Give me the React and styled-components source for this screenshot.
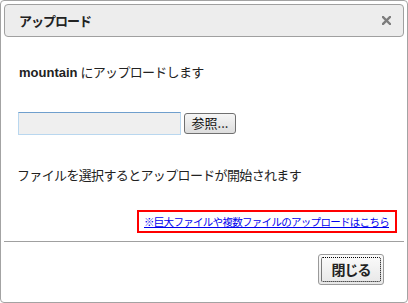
import React from "react";
import styled, { createGlobalStyle } from "styled-components";

const GlobalStyle = createGlobalStyle`
    html, body {
        margin: 0;
        padding: 0;
        background: #ffffff;
    }
    body {
        font-family: "Noto Sans CJK JP", "Liberation Sans", sans-serif;
        color: #222222;
    }
`;

const Dialog = styled.div`
    box-sizing: border-box;
    width: 408px;
    height: 303px;
    border: 1px solid #a3a3a3;
    border-radius: 4px;
    padding: 3px;
    background: #ffffff;
    display: flex;
    flex-direction: column;
`;

const TitleBar = styled.div`
    box-sizing: border-box;
    height: 33px;
    border: 1px solid #a0a0a0;
    border-radius: 4px;
    background: #ededed;
    display: flex;
    align-items: center;
    justify-content: space-between;
    padding: 0 12px 0 14px;
`;

const Title = styled.span`
    font-size: 13px;
    font-weight: bold;
    letter-spacing: -1px;
    color: #222222;
`;

const CloseIcon = styled.button`
    border: 0;
    padding: 0;
    background: transparent;
    width: 10px;
    height: 10px;
    display: flex;
    align-items: center;
    justify-content: center;
    cursor: pointer;
`;

const Body = styled.div`
    padding: 0 0 0 14px;
    display: flex;
    flex-direction: column;
`;

const Message = styled.p`
    margin: 25px 0 0 1px;
    font-size: 13px;
    line-height: 20px;
    letter-spacing: -0.7px;
    b {
        font-family: "Liberation Sans", sans-serif;
        font-weight: bold;
        letter-spacing: 0;
        margin-right: 3px;
    }
`;

const FileRow = styled.div`
    margin-top: 29px;
    display: flex;
    align-items: center;
    gap: 3px;
`;

const FileInput = styled.div`
    box-sizing: border-box;
    width: 163px;
    height: 23px;
    background: #efefef;
    border: 1px solid #b9d7ef;
    border-top-color: #6f9fcd;
`;

const BrowseButton = styled.button`
    box-sizing: border-box;
    width: 52px;
    height: 21px;
    padding: 0 0 2px;
    border: 1px solid #707070;
    border-radius: 3px;
    background: linear-gradient(#f6f6f6, #dddddd);
    font-family: inherit;
    font-size: 13px;
    line-height: 17px;
    color: #111111;
`;

const Hint = styled.p`
    margin: 30px 0 0 -1px;
    font-size: 13px;
    line-height: 20px;
    letter-spacing: -0.65px;
`;

const LinkRow = styled.div`
    margin: 25px 7px 0 0;
    display: flex;
    justify-content: flex-end;
`;

const Highlight = styled.div`
    box-sizing: border-box;
    height: 23px;
    border: 2px solid #ff0000;
    padding: 0 6px 0 5px;
    display: flex;
    align-items: center;
`;

const BigLink = styled.a`
    font-size: 10.5px;
    letter-spacing: -0.7px;
    line-height: 14px;
    color: #0000ee;
    text-decoration: underline;
`;

const Footer = styled.div`
    margin-top: 8px;
    border-top: 1px solid #a0a0a0;
    padding: 12px 20px 0 0;
    display: flex;
    justify-content: flex-end;
`;

const CloseButton = styled.button`
    position: relative;
    box-sizing: border-box;
    width: 66px;
    height: 31px;
    border: 1px solid #9a9a9a;
    border-radius: 3px;
    background: linear-gradient(#fbfbfb, #e7e7e7);
    font-family: inherit;
    font-size: 14px;
    font-weight: bold;
    letter-spacing: -1px;
    color: #222222;
    padding: 0 0 2px;
    &::after {
        content: "";
        position: absolute;
        inset: 2px;
        border: 1px dotted #000000;
        border-radius: 2px;
    }
`;

const App = () => {
    return (
        <>
            <GlobalStyle />
            <Dialog>
                <TitleBar>
                    <Title>アップロード</Title>
                    <CloseIcon aria-label="close">
                        <svg width="9" height="9" viewBox="0 0 9 9">
                            <path d="M1 1 L8 8 M8 1 L1 8" stroke="#7d7d7d" strokeWidth="2.4" strokeLinecap="square" />
                        </svg>
                    </CloseIcon>
                </TitleBar>
                <Body>
                    <Message>
                        <b>mountain</b>にアップロードします
                    </Message>
                    <FileRow>
                        <FileInput />
                        <BrowseButton>参照...</BrowseButton>
                    </FileRow>
                    <Hint>ファイルを選択するとアップロードが開始されます</Hint>
                    <LinkRow>
                        <Highlight>
                            <BigLink href="#">※巨大ファイルや複数ファイルのアップロードはこちら</BigLink>
                        </Highlight>
                    </LinkRow>
                </Body>
                <Footer>
                    <CloseButton>閉じる</CloseButton>
                </Footer>
            </Dialog>
        </>
    );
};

export default App;
